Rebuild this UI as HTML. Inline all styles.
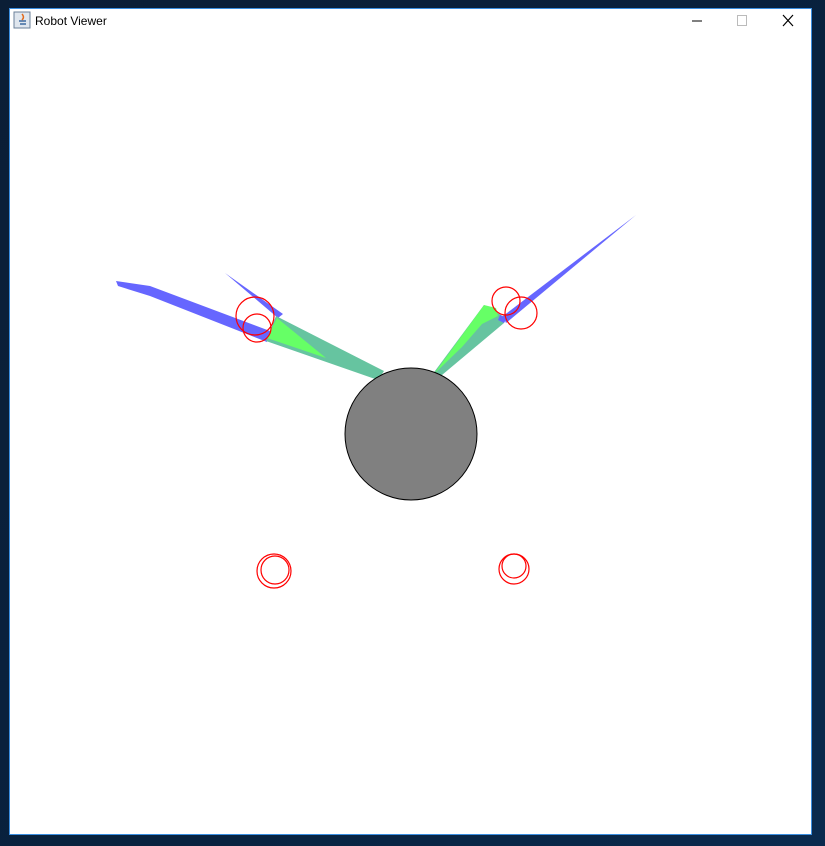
<!DOCTYPE html>
<html><head><meta charset="utf-8"><style>
html,body{margin:0;padding:0;width:825px;height:846px;overflow:hidden;background:#0a2444;}
</style></head><body>
<svg width="825" height="846" viewBox="0 0 825 846" xmlns="http://www.w3.org/2000/svg" style="position:absolute;left:0;top:0">
<defs><linearGradient id="bg" x1="0" y1="0" x2="1" y2="1"><stop offset="0" stop-color="#0b1e36"/><stop offset="0.6" stop-color="#08223f"/><stop offset="1" stop-color="#0a2a4e"/></linearGradient></defs>
<rect width="825" height="846" fill="url(#bg)"/>
<rect x="9.5" y="8.5" width="802" height="826" fill="#fff" stroke="#3a8ee0" stroke-width="1"/>
<rect x="14" y="12" width="16" height="16" fill="#dfe6ee" stroke="#6b8099" stroke-width="1"/>
<path d="M20 24 h6 M19 21 h7" stroke="#3d6aa0" stroke-width="1.5"/>
<path d="M22 14 q3 3 0 6" stroke="#e26a1c" stroke-width="1.5" fill="none"/>
<text x="35" y="25" font-family="Liberation Sans, sans-serif" font-size="12" fill="#000">Robot Viewer</text>
<path d="M692 21 h10" stroke="#000" stroke-width="1"/>
<rect x="737.5" y="15.5" width="9" height="10" fill="none" stroke="#bbb"/>
<path d="M783 15 l10 11 M793 15 l-10 11" stroke="#000" stroke-width="1.2"/>
<path d="M225 273 L283 314 L278 318 Z" fill="#6666ff"/>
<path d="M116 281 L150 286 L270 331 L267 342 L150 296 L118 286 Z" fill="#6666ff"/>
<path d="M276 316 L266 341 L378 380 L384 371 Z" fill="#66c4a0"/>
<path d="M277 318 L267 338 L326 358 Z" fill="#66ff66"/>
<path d="M503 316 L636 215 L506 323 Z" fill="#6666ff"/>
<path d="M484 305 L506 318 L504 323 L442 375 L432 375 Z" fill="#66c4a0"/>
<path d="M484 305 L496 308 L498 316 L482 324 L462 347 L434 374 Z" fill="#66ff66"/>
<path d="M500 315 L507 318 L504 323 L498 320 Z" fill="#6666ff"/>
<circle cx="411" cy="434" r="66" fill="#808080" stroke="#000" stroke-width="1"/>
<g fill="none" stroke="#ff0000" stroke-width="1.2">
<circle cx="255" cy="316" r="19"/>
<circle cx="257" cy="328" r="14"/>
<circle cx="506" cy="301" r="14"/>
<circle cx="521" cy="313" r="16"/>
<circle cx="274" cy="571" r="17"/>
<circle cx="275" cy="570" r="14"/>
<circle cx="514" cy="569" r="15"/>
<circle cx="514" cy="566" r="12"/>
</g>
</svg>
</body></html>
